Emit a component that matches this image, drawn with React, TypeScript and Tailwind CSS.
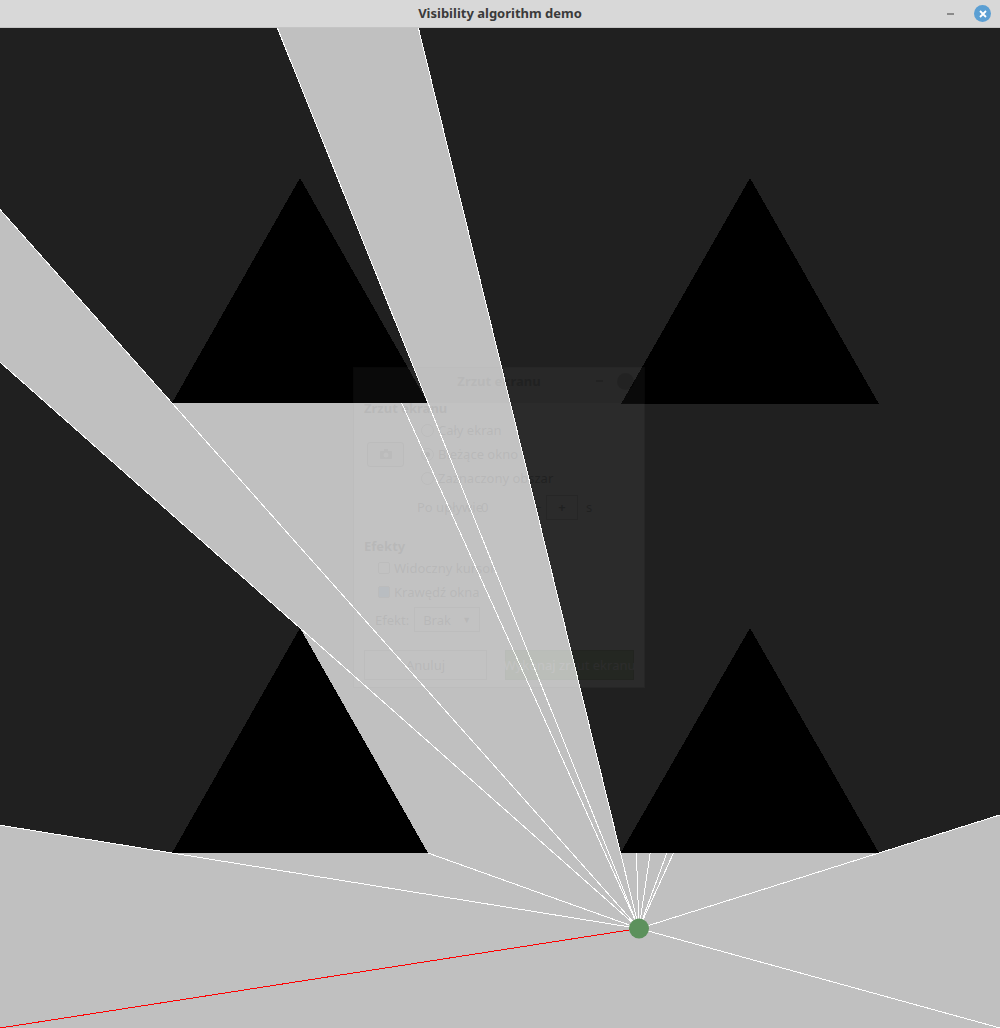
import React from 'react';

type Pt = [number, number];

// scene in page coordinates (canvas starts at y=28)
const LIGHT: Pt = [639, 928.5];

const triangles: Pt[][] = [
    [[172, 403], [300, 178], [428, 403]],
    [[621, 404], [750, 178], [879, 404]],
    [[172, 853], [300, 628], [428, 853]],
    [[620.5, 853], [750, 628], [879, 853]],
];

const visible: Pt[] = [
    [0, 1028], [0, 825.2], [172, 853], [428, 853], [300, 628], [0, 362.1], [0, 209.5],
    [172, 403], [428, 403], [277.4, 28], [418.4, 28], [620.5, 853], [879, 853],
    [1000, 814.9], [1000, 1028],
];

const rays: Pt[] = [
    [0, 825.2], [428, 853], [0, 362.1], [0, 209.5], [401.6, 403], [277.4, 28], [418.4, 28],
    [636.4, 853], [650.2, 853], [666.9, 853], [673.5, 853], [1000, 814.9], [1000, 1028],
];

const pts = (p: Pt[]) => p.map((q) => q.join(',')).join(' ');

const TitleBar = () => (
    <div className="flex h-[28px] shrink-0 items-center bg-[#d8d8d8] border-b border-[#c4c4c4]">
        <div className="w-[80px]" />
        <div className="flex-1 text-center text-[13px] font-bold text-[#3a3a3a] [font-family:'Noto_Sans',sans-serif]">
            Visibility algorithm demo
        </div>
        <div className="flex w-[80px] items-center justify-end gap-[20px] pr-[9px]">
            <div className="h-[2px] w-[7px] bg-[#8a8a8a]" />
            <div className="flex h-[17px] w-[17px] items-center justify-center rounded-full bg-[#5b9fd3]">
                <svg width="8" height="8" viewBox="0 0 8 8">
                    <path d="M1 1L7 7M7 1L1 7" stroke="white" strokeWidth="1.8" />
                </svg>
            </div>
        </div>
    </div>
);

const Scene = () => (
    <svg width="1000" height="1000" viewBox="0 28 1000 1000" className="block">
        <rect x="0" y="28" width="1000" height="1000" fill="#202020" />
        <polygon points={pts(visible)} fill="#c0c0c0" shapeRendering="crispEdges" />
        {triangles.map((t, i) => (
            <polygon key={i} points={pts(t)} fill="#000" shapeRendering="crispEdges" />
        ))}
        {rays.map((r, i) => (
            <line key={i} x1={LIGHT[0]} y1={LIGHT[1]} x2={r[0]} y2={r[1]} stroke="#fff" strokeWidth="1" shapeRendering="crispEdges" />
        ))}
        <line x1={LIGHT[0]} y1={LIGHT[1]} x2="0" y2="1028" stroke="#ff0000" strokeWidth="1" shapeRendering="crispEdges" />
        <circle cx={LIGHT[0]} cy={LIGHT[1]} r="10" fill="#5c915c" />
    </svg>
);

// faint ghost of a screenshot dialog lying over the canvas
const GhostDialog = () => (
    <div className="absolute left-[353px] top-[339px] flex w-[292px] flex-col whitespace-nowrap border border-[#999] bg-[#f6f6f6] pb-[7px] text-[13px] leading-[16px] text-[#2e3436] opacity-[0.05] [font-family:'Noto_Sans',sans-serif]">
        <div className="flex h-[35px] shrink-0 items-start bg-[#b8b8b8] px-[10px] pt-[4px]">
            <div className="w-[60px]" />
            <div className="flex-1 text-center font-bold leading-[18px]">Zrzut ekranu</div>
            <div className="flex h-[18px] w-[60px] items-center justify-end gap-[14px]">
                <div className="h-[2px] w-[7px] bg-[#555]" />
                <div className="h-[17px] w-[17px] rounded-full bg-[#555]" />
            </div>
        </div>
        <div className="flex flex-col px-[10px]">
            <div className="-mt-[3px] h-[16px] font-bold">Zrzut ekranu</div>
            <div className="mt-[2px] flex">
                <div className="flex w-[52px] items-center">
                    <div className="ml-[3px] flex h-[25px] w-[37px] items-center justify-center rounded-[3px] border border-[#777] bg-[#ddd]">
                        <svg width="14" height="12" viewBox="0 0 14 12">
                            <rect x="1" y="3" width="12" height="8" rx="1" fill="#666" />
                            <rect x="5" y="1" width="4" height="3" fill="#666" />
                            <circle cx="7" cy="7" r="2.5" fill="#ddd" />
                        </svg>
                    </div>
                </div>
                <div className="flex flex-col">
                    {['Cały ekran', 'Bieżące okno', 'Zaznaczony obszar'].map((t, i) => (
                        <div key={t} className="flex h-[24px] items-center gap-[4px]">
                            <div className="ml-[5px] flex h-[13px] w-[13px] items-center justify-center rounded-full border border-[#777]">
                                {i === 1 && <div className="h-[5px] w-[5px] rounded-full bg-[#333]" />}
                            </div>
                            <span>{t}</span>
                        </div>
                    ))}
                </div>
            </div>
            <div className="ml-[53px] mt-[4px] flex h-[26px] items-center">
                <span className="w-[63px] shrink-0">Po upływie</span>
                <span className="w-[54px] shrink-0 pl-[1px]">0</span>
                <span className="w-[12px] shrink-0">−</span>
                <div className="flex h-[25px] w-[32px] shrink-0 items-center justify-center border border-[#999] font-bold">+</div>
                <span className="ml-[8px]">s</span>
            </div>
            <div className="mt-[18px] h-[16px] font-bold">Efekty</div>
            <div className="ml-[14px] mt-[2px] flex flex-col">
                {[['Widoczny kursor', false], ['Krawędź okna', true]].map(([t, c]) => (
                    <div key={t as string} className="flex h-[24px] items-center gap-[4px]">
                        <div className={`h-[12px] w-[12px] rounded-[2px] border border-[#777] ${c ? 'bg-[#4a90d9]' : ''}`} />
                        <span>{t as string}</span>
                    </div>
                ))}
            </div>
            <div className="ml-[11px] mt-[3px] flex h-[25px] items-center gap-[5px]">
                <span>Efekt:</span>
                <div className="flex h-[25px] w-[66px] items-center justify-between border border-[#999] px-[8px]">
                    <span>Brak</span>
                    <span className="text-[9px]">▼</span>
                </div>
            </div>
            <div className="mt-[18px] flex gap-[18px]">
                <div className="flex h-[30px] w-[127px] items-center justify-center border border-[#999]">Anuluj</div>
                <div className="flex h-[30px] w-[129px] items-center justify-center border border-[#4b7a2e] bg-[#6ba845] text-white">
                    Wykonaj zrzut ekranu
                </div>
            </div>
        </div>
    </div>
);

export default function App() {
    return (
        <div className="flex h-[1028px] w-[1000px] flex-col overflow-hidden bg-[#202020]">
            <TitleBar />
            <div className="relative h-[1000px] shrink-0">
                <Scene />
                <GhostDialog />
            </div>
        </div>
    );
}
